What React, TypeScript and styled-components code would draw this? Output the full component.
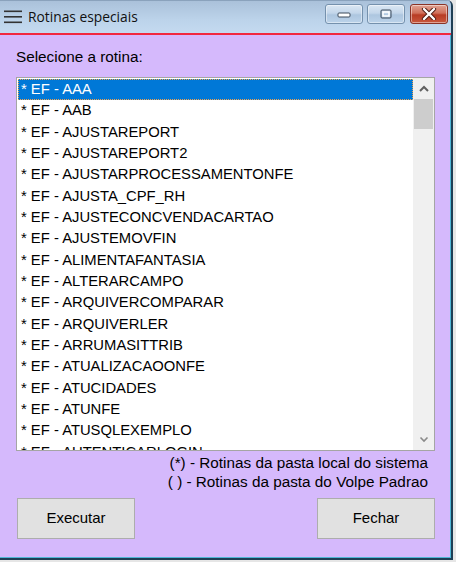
import React from "react";
import styled, { createGlobalStyle } from "styled-components";

const Global = createGlobalStyle`
  html, body { margin: 0; padding: 0; background: #e6e6e6; }
  body { font-family: "Liberation Sans", Arial, sans-serif; }
`;

const Window = styled.div`
  width: 451px;
  height: 558px;
  display: flex;
  flex-direction: column;
  border-right: 2px solid #1f3f55;
  border-bottom: 2px solid #1f3f55;
  box-shadow: inset -1px -1px 0 #4fb6d6;
  border-top-right-radius: 6px;
  overflow: hidden;
  background: #d5b9fc;
`;

const TitleBar = styled.div`
  height: 33px;
  flex: none;
  display: flex;
  align-items: center;
  padding: 0 3px 0 4px;
  background: linear-gradient(#a9c0d9, #bcd3ea 60%, #c4daf0);
  border-bottom: 2px solid #f2283f;
  box-shadow: inset 0 1px 0 #8aa2bc;
`;

const Burger = styled.svg`
  width: 19px;
  height: 16px;
  margin-right: 5px;
  flex: none;
`;

const Title = styled.span`
  font-family: "Open Sans", "Noto Sans", sans-serif;
  font-size: 13.8px;
  color: #111;
  flex: 1;
  padding-bottom: 1px;
`;

const Ctl = styled.div<{ $close?: boolean }>`
  width: 38px;
  height: 20px;
  margin-left: ${(p) => (p.$close ? 5 : 4)}px;
  margin-bottom: 5px;
  border-radius: 3px;
  border: 1px solid ${(p) => (p.$close ? "#8a3326" : "#7591ad")};
  background: ${(p) =>
    p.$close
      ? "linear-gradient(#e0a393, #d0705a 45%, #b83c24 55%, #c8583e)"
      : "linear-gradient(#dbe7f3, #c3d6ea 45%, #adc6df 55%, #bcd3ea)"};
  box-shadow: inset 0 0 0 1px rgba(255, 255, 255, 0.45);
  display: flex;
  align-items: center;
  justify-content: center;
  box-sizing: border-box;
`;

const Client = styled.div`
  flex: 1;
  display: flex;
  flex-direction: column;
  padding: 14px 16px 0 16px;
  font-size: 15px;
  color: #000;
`;

const Label = styled.div`
  line-height: 16px;
  margin-bottom: 12px;
  font-size: 15.3px;
`;

const ListBox = styled.div`
  height: 374px;
  width: 419px;
  box-sizing: border-box;
  border: 1px solid #a5a5a5;
  background: #fff;
  display: flex;
  overflow: hidden;
`;

const Rows = styled.div`
  flex: 1;
  padding: 1px 0 0 1px;
  overflow: hidden;
`;

const Row = styled.div<{ $sel?: boolean }>`
  height: 21.33px;
  line-height: 21.33px;
  padding-left: 3px;
  font-size: 14.8px;
  white-space: nowrap;
  box-sizing: border-box;
  background: ${(p) => (p.$sel ? "#0078d7" : "transparent")};
  color: ${(p) => (p.$sel ? "#fff" : "#000")};
  outline: ${(p) => (p.$sel ? "1px dotted #f1a24e" : "none")};
  outline-offset: -1px;
`;

const ScrollBar = styled.div`
  width: 21px;
  flex: none;
  background: #f0f0f0;
  display: flex;
  flex-direction: column;
`;

const Arrow = styled.div`
  height: 21px;
  display: flex;
  align-items: center;
  justify-content: center;
  flex: none;
`;

const Thumb = styled.div`
  height: 30px;
  margin: 0 1px;
  background: #cdcdcd;
  flex: none;
`;

const Track = styled.div`
  flex: 1;
`;

const Legend = styled.div`
  text-align: right;
  padding-right: 7px;
  line-height: 19px;
  margin-top: 2px;
  font-size: 15.3px;
`;

const Buttons = styled.div`
  display: flex;
  justify-content: space-between;
  width: 419px;
  margin-top: 7px;
  padding-left: 1px;
  box-sizing: border-box;
`;

const Button = styled.button`
  width: 118px;
  height: 41px;
  background: #e1e1e1;
  border: 1px solid #adadad;
  font-family: "Liberation Sans", Arial, sans-serif;
  font-size: 15px;
  color: #000;
  padding: 0 0 2px 0;
`;

const items = [
  "AAA",
  "AAB",
  "AJUSTAREPORT",
  "AJUSTAREPORT2",
  "AJUSTARPROCESSAMENTONFE",
  "AJUSTA_CPF_RH",
  "AJUSTECONCVENDACARTAO",
  "AJUSTEMOVFIN",
  "ALIMENTAFANTASIA",
  "ALTERARCAMPO",
  "ARQUIVERCOMPARAR",
  "ARQUIVERLER",
  "ARRUMASITTRIB",
  "ATUALIZACAOONFE",
  "ATUCIDADES",
  "ATUNFE",
  "ATUSQLEXEMPLO",
  "AUTENTICARLOGIN",
];

export default function App() {
  return (
    <>
      <Global />
      <Window>
        <TitleBar>
          <Burger viewBox="0 0 19 16">
            <rect x="0" y="1.5" width="18" height="1.6" fill="#333" />
            <rect x="0" y="7" width="18" height="1.6" fill="#333" />
            <rect x="0" y="12.5" width="18" height="1.6" fill="#333" />
          </Burger>
          <Title>Rotinas especiais</Title>
          <Ctl>
            <svg width="14" height="8" viewBox="0 0 14 8">
              <rect x="1" y="3" width="12" height="4" rx="1" fill="#fff" stroke="#3c4a5a" strokeWidth="1" />
            </svg>
          </Ctl>
          <Ctl>
            <svg width="12" height="10" viewBox="0 0 12 10">
              <rect x="1" y="1" width="10" height="8" rx="1" fill="none" stroke="#3c4a5a" strokeWidth="1" />
              <rect x="3" y="3" width="6" height="4" fill="none" stroke="#fff" strokeWidth="1.5" />
            </svg>
          </Ctl>
          <Ctl $close>
            <svg width="16" height="12" viewBox="0 0 16 12">
              <path d="M3 1 L13 11 M13 1 L3 11" stroke="#4a1c14" strokeWidth="4.2" strokeLinecap="round" />
              <path d="M3 1 L13 11 M13 1 L3 11" stroke="#fff" strokeWidth="2.4" strokeLinecap="round" />
            </svg>
          </Ctl>
        </TitleBar>
        <Client>
          <Label>Selecione a rotina:</Label>
          <ListBox>
            <Rows>
              {items.map((it, i) => (
                <Row key={it} $sel={i === 0}>
                  * EF - {it}
                </Row>
              ))}
            </Rows>
            <ScrollBar>
              <Arrow>
                <svg width="10" height="7" viewBox="0 0 10 7">
                  <path d="M1 6 L5 2 L9 6" fill="none" stroke="#606060" strokeWidth="2" />
                </svg>
              </Arrow>
              <Thumb />
              <Track />
              <Arrow>
                <svg width="10" height="7" viewBox="0 0 10 7">
                  <path d="M1.5 1.5 L5 5 L8.5 1.5" fill="none" stroke="#8a8a8a" strokeWidth="1.6" />
                </svg>
              </Arrow>
            </ScrollBar>
          </ListBox>
          <Legend>
            <div>(*) - Rotinas da pasta local do sistema</div>
            <div>( ) - Rotinas da pasta do Volpe Padrao</div>
          </Legend>
          <Buttons>
            <Button>Executar</Button>
            <Button>Fechar</Button>
          </Buttons>
        </Client>
      </Window>
    </>
  );
}
